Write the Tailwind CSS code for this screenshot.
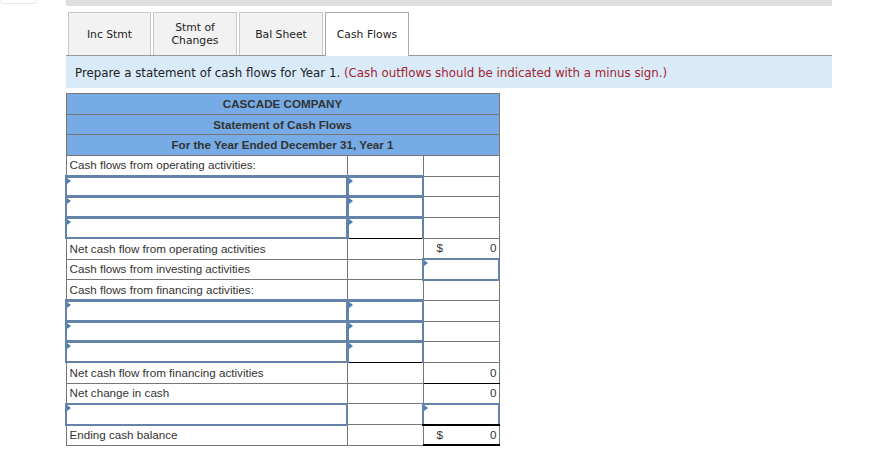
<!DOCTYPE html>
<html lang="en">

<head>
    <meta charset="UTF-8">
    <title>Cash Flows</title>
    <script src="https://cdn.jsdelivr.net/npm/@tailwindcss/browser@4"></script>
</head>

<body class="bg-white w-[869px] h-[452px] overflow-hidden relative">
    <!-- leftover box at the top left -->
    <div class="absolute left-0 -top-[10px] w-[37px] h-[14px] border border-[#e8e8e8] rounded-[3px]"></div>

    <div class="ml-[66px] w-[766px]">
        <div class="h-[6px] bg-[#dedede]"></div>

        <!-- Tabs -->
        <div class="flex items-end gap-[2px] h-[50px] pl-[2px] border-b border-[#999] font-['DejaVu_Sans',sans-serif] text-[10.8px] leading-[13px] text-[#222] text-center">
            <div class="w-[83px] h-[43px] flex items-center justify-center bg-[#f2f2f2] border border-b-0 border-[#c8c8c8]">Inc Stmt</div>
            <div class="w-[84px] h-[43px] flex items-center justify-center bg-[#f2f2f2] border border-b-0 border-[#c8c8c8]">Stmt of<br>Changes</div>
            <div class="w-[84px] h-[43px] flex items-center justify-center bg-[#f2f2f2] border border-b-0 border-[#c8c8c8]">Bal Sheet</div>
            <div class="w-[84px] h-[44px] -mb-px flex items-center justify-center bg-white border border-b-0 border-[#aaa]">Cash Flows</div>
        </div>

        <!-- Instructions -->
        <div class="h-[32px] flex items-center pl-[9px] pt-[3px] bg-[#d9ebf9] font-['DejaVu_Sans',sans-serif] text-[11.82px] text-[#222]">
            <span>Prepare a statement of cash flows for Year 1. <span class="text-[#a5222f]">(Cash outflows should be indicated with a minus sign.)</span></span>
        </div>

        <!-- Statement -->
        <table class="mt-[5px] -ml-px w-[433px] table-fixed border-collapse font-['Liberation_Sans',Arial,sans-serif] text-[11.65px] leading-[14px] text-[#333]">
            <colgroup>
                <col class="w-[281px]">
                <col class="w-[76px]">
                <col class="w-[76px]">
            </colgroup>
            <tbody>
                <tr class="h-[20.7px]"><td colspan="3" class="p-0 border border-[#777] bg-[#76abe5] text-center font-bold">CASCADE COMPANY</td></tr>
                <tr class="h-[20.7px]"><td colspan="3" class="p-0 border border-[#777] bg-[#76abe5] text-center font-bold">Statement of Cash Flows</td></tr>
                <tr class="h-[20.7px]"><td colspan="3" class="p-0 border border-[#777] bg-[#76abe5] text-center font-bold">For the Year Ended December 31, Year 1</td></tr>

                <tr class="h-[20.7px]">
                    <td class="p-0 pl-[3px] border border-[#777]">Cash flows from operating activities:</td>
                    <td class="p-0 border border-[#777]"></td>
                    <td class="p-0 border border-[#777]"></td>
                </tr>
                <tr class="h-[20.7px]">
                    <td class="relative p-0 border-y-[3px] border-l-[2px] border-r-[3px] border-[#6583a8]"><svg class="absolute left-0 top-0 w-[4px] h-[6px]" viewBox="0 0 4 6"><path d="M0 0L4 3L0 6Z" fill="#4a7db8"/></svg></td>
                    <td class="relative p-0 border-y-[3px] border-l-[3px] border-r-[2px] border-[#6583a8]"><svg class="absolute left-0 top-0 w-[4px] h-[6px]" viewBox="0 0 4 6"><path d="M0 0L4 3L0 6Z" fill="#4a7db8"/></svg></td>
                    <td class="p-0 border border-[#777]"></td>
                </tr>
                <tr class="h-[20.7px]">
                    <td class="relative p-0 border-y-[3px] border-l-[2px] border-r-[3px] border-[#6583a8]"><svg class="absolute left-0 top-0 w-[4px] h-[6px]" viewBox="0 0 4 6"><path d="M0 0L4 3L0 6Z" fill="#4a7db8"/></svg></td>
                    <td class="relative p-0 border-y-[3px] border-l-[3px] border-r-[2px] border-[#6583a8]"><svg class="absolute left-0 top-0 w-[4px] h-[6px]" viewBox="0 0 4 6"><path d="M0 0L4 3L0 6Z" fill="#4a7db8"/></svg></td>
                    <td class="p-0 border border-[#777]"></td>
                </tr>
                <tr class="h-[20.7px]">
                    <td class="relative p-0 border-t-[3px] border-b-[2px] border-l-[2px] border-r-[3px] border-[#6583a8]"><svg class="absolute left-0 top-0 w-[4px] h-[6px]" viewBox="0 0 4 6"><path d="M0 0L4 3L0 6Z" fill="#4a7db8"/></svg></td>
                    <td class="relative p-0 border-t-[3px] border-b border-l-[3px] border-r-[2px] border-[#6583a8] border-b-black"><svg class="absolute left-0 top-0 w-[4px] h-[6px]" viewBox="0 0 4 6"><path d="M0 0L4 3L0 6Z" fill="#4a7db8"/></svg></td>
                    <td class="p-0 border border-[#777]"></td>
                </tr>

                <tr class="h-[20.7px]">
                    <td class="p-0 pl-[3px] border border-[#777]">Net cash flow from operating activities</td>
                    <td class="p-0 border border-[#777]"></td>
                    <td class="p-0 border border-[#777]"><div class="flex justify-between pl-[13px] pr-[2px]"><span>$</span><span>0</span></div></td>
                </tr>
                <tr class="h-[20.7px]">
                    <td class="p-0 pl-[3px] border border-[#777]">Cash flows from investing activities</td>
                    <td class="p-0 border border-[#777]"></td>
                    <td class="relative p-0 border-[2px] border-[#6583a8]"><svg class="absolute left-0 top-0 w-[4px] h-[6px]" viewBox="0 0 4 6"><path d="M0 0L4 3L0 6Z" fill="#4a7db8"/></svg></td>
                </tr>
                <tr class="h-[20.7px]">
                    <td class="p-0 pl-[3px] border border-[#777]">Cash flows from financing activities:</td>
                    <td class="p-0 border border-[#777]"></td>
                    <td class="p-0 border border-[#777]"></td>
                </tr>
                <tr class="h-[20.7px]">
                    <td class="relative p-0 border-y-[3px] border-l-[2px] border-r-[3px] border-[#6583a8]"><svg class="absolute left-0 top-0 w-[4px] h-[6px]" viewBox="0 0 4 6"><path d="M0 0L4 3L0 6Z" fill="#4a7db8"/></svg></td>
                    <td class="relative p-0 border-y-[3px] border-l-[3px] border-r-[2px] border-[#6583a8]"><svg class="absolute left-0 top-0 w-[4px] h-[6px]" viewBox="0 0 4 6"><path d="M0 0L4 3L0 6Z" fill="#4a7db8"/></svg></td>
                    <td class="p-0 border border-[#777]"></td>
                </tr>
                <tr class="h-[20.7px]">
                    <td class="relative p-0 border-y-[3px] border-l-[2px] border-r-[3px] border-[#6583a8]"><svg class="absolute left-0 top-0 w-[4px] h-[6px]" viewBox="0 0 4 6"><path d="M0 0L4 3L0 6Z" fill="#4a7db8"/></svg></td>
                    <td class="relative p-0 border-y-[3px] border-l-[3px] border-r-[2px] border-[#6583a8]"><svg class="absolute left-0 top-0 w-[4px] h-[6px]" viewBox="0 0 4 6"><path d="M0 0L4 3L0 6Z" fill="#4a7db8"/></svg></td>
                    <td class="p-0 border border-[#777]"></td>
                </tr>
                <tr class="h-[20.7px]">
                    <td class="relative p-0 border-t-[3px] border-b-[2px] border-l-[2px] border-r-[3px] border-[#6583a8]"><svg class="absolute left-0 top-0 w-[4px] h-[6px]" viewBox="0 0 4 6"><path d="M0 0L4 3L0 6Z" fill="#4a7db8"/></svg></td>
                    <td class="relative p-0 border-t-[3px] border-b border-l-[3px] border-r-[2px] border-[#6583a8] border-b-black"><svg class="absolute left-0 top-0 w-[4px] h-[6px]" viewBox="0 0 4 6"><path d="M0 0L4 3L0 6Z" fill="#4a7db8"/></svg></td>
                    <td class="p-0 border border-[#777]"></td>
                </tr>

                <tr class="h-[20.7px]">
                    <td class="p-0 pl-[3px] border border-[#777]">Net cash flow from financing activities</td>
                    <td class="p-0 border border-[#777]"></td>
                    <td class="p-0 pr-[2px] border border-[#777] border-b-black text-right">0</td>
                </tr>
                <tr class="h-[20.7px]">
                    <td class="p-0 pl-[3px] border border-[#777]">Net change in cash</td>
                    <td class="p-0 border border-[#777]"></td>
                    <td class="p-0 pr-[2px] border border-[#777] text-right">0</td>
                </tr>
                <tr class="h-[20.7px]">
                    <td class="relative p-0 border-[2px] border-[#6583a8]"><svg class="absolute left-0 top-0 w-[4px] h-[6px]" viewBox="0 0 4 6"><path d="M0 0L4 3L0 6Z" fill="#4a7db8"/></svg></td>
                    <td class="p-0 border border-[#777]"></td>
                    <td class="relative p-0 border-[2px] border-[#6583a8] border-b-black"><svg class="absolute left-0 top-0 w-[4px] h-[6px]" viewBox="0 0 4 6"><path d="M0 0L4 3L0 6Z" fill="#4a7db8"/></svg></td>
                </tr>
                <tr class="h-[20.7px]">
                    <td class="p-0 pl-[3px] border border-[#777]">Ending cash balance</td>
                    <td class="p-0 border border-[#777]"></td>
                    <td class="p-0 border border-[#777] border-b-[2px] border-b-black"><div class="flex justify-between pl-[13px] pr-[2px]"><span>$</span><span>0</span></div></td>
                </tr>
            </tbody>
        </table>
    </div>
</body>

</html>
